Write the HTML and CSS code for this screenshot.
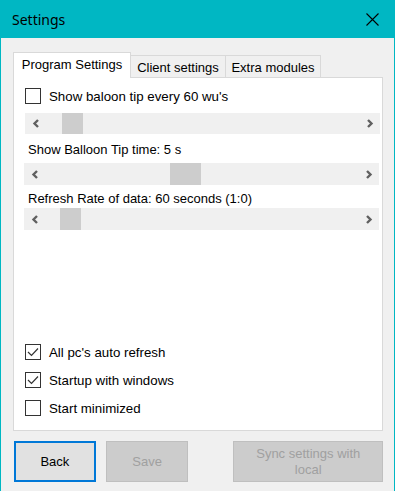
FILE: index.html
```html
<!DOCTYPE html>
<html>
<head>
  <meta charset="utf-8" />
  <title>Settings</title>
  <meta name="viewport" content="width=device-width, initial-scale=1">
  <link rel="stylesheet" href="styles.css">
</head>
<body>
  <div class="window">
    <div class="titlebar">
      <span class="title">Settings</span>
      <svg class="close" width="13" height="13" viewBox="0 0 13 13"><path d="M0.5 0.5 L12.5 12.5 M12.5 0.5 L0.5 12.5" stroke="#000" stroke-width="1.1" fill="none"/></svg>
    </div>
    <div class="client">
      <div class="tab-strip">
        <div class="tab active">Program Settings</div>
        <div class="tab client-tab">Client settings</div>
        <div class="tab extra-tab">Extra modules</div>
      </div>
      <div class="panel">
        <label class="check first">
          <span class="box"></span>
          <span>Show baloon tip every 60 wu's</span>
        </label>
        <div class="scrollbar sb1">
          <span class="arrow"><svg width="8" height="9" viewBox="0 0 8 9"><path d="M6 1 L2.5 4.5 L6 8" stroke="#606060" stroke-width="2.4" fill="none"/></svg></span>
          <div class="track"><span class="thumb" style="margin-left:16px"></span></div>
          <span class="arrow"><svg width="8" height="9" viewBox="0 0 8 9"><path d="M2 1 L5.5 4.5 L2 8" stroke="#606060" stroke-width="2.4" fill="none"/></svg></span>
        </div>
        <div class="label l2">Show Balloon Tip time: 5 s</div>
        <div class="scrollbar sb2">
          <span class="arrow"><svg width="8" height="9" viewBox="0 0 8 9"><path d="M6 1 L2.5 4.5 L6 8" stroke="#606060" stroke-width="2.4" fill="none"/></svg></span>
          <div class="track"><span class="thumb wide" style="margin-left:125px"></span></div>
          <span class="arrow"><svg width="8" height="9" viewBox="0 0 8 9"><path d="M2 1 L5.5 4.5 L2 8" stroke="#606060" stroke-width="2.4" fill="none"/></svg></span>
        </div>
        <div class="label l3">Refresh Rate of data: 60 seconds (1:0)</div>
        <div class="scrollbar sb3">
          <span class="arrow"><svg width="8" height="9" viewBox="0 0 8 9"><path d="M6 1 L2.5 4.5 L6 8" stroke="#606060" stroke-width="2.4" fill="none"/></svg></span>
          <div class="track"><span class="thumb" style="margin-left:15px"></span></div>
          <span class="arrow"><svg width="8" height="9" viewBox="0 0 8 9"><path d="M2 1 L5.5 4.5 L2 8" stroke="#606060" stroke-width="2.4" fill="none"/></svg></span>
        </div>
        <div class="bottom-checks">
          <label class="check">
            <span class="box"><svg width="14" height="14" viewBox="0 0 14 14"><path d="M2 7 L5.5 10.5 L12 3.5" stroke="#333" stroke-width="1.2" fill="none"/></svg></span>
            <span>All pc's auto refresh</span>
          </label>
          <label class="check">
            <span class="box"><svg width="14" height="14" viewBox="0 0 14 14"><path d="M2 7 L5.5 10.5 L12 3.5" stroke="#333" stroke-width="1.2" fill="none"/></svg></span>
            <span>Startup with windows</span>
          </label>
          <label class="check">
            <span class="box"></span>
            <span>Start minimized</span>
          </label>
        </div>
      </div>
      <div class="buttons">
        <button class="btn back">Back</button>
        <button class="btn disabled save">Save</button>
        <button class="btn disabled sync">Sync settings with<br>local</button>
      </div>
    </div>
  </div>
</body>
</html>
```

FILE: styles.css
```css
* { margin: 0; padding: 0; box-sizing: border-box; }
body { width: 395px; height: 491px; background: #00b7c3; font-family: 'Liberation Sans', Arial, sans-serif; font-size: 13px; color: #000; overflow: hidden; }
.window { display: flex; flex-direction: column; height: 491px; }
.titlebar { display: flex; align-items: center; justify-content: space-between; height: 38px; padding: 0 16px 0 12px; }
.title { font-family: 'Noto Sans', sans-serif; font-size: 14px; margin-top: 1px; }
.close { margin-top: 1px; }
.client { flex: 1; margin: 0 1px; background: #f0f0f0; padding: 14px 11px 0 12px; }

.tab-strip { display: flex; align-items: flex-end; height: 25px; }
.tab { height: 22px; border: 1px solid #d9d9d9; border-bottom: none; background: #f0f0f0; display: flex; align-items: center; justify-content: center; padding-top: 2px; }
.tab.active { position: relative; z-index: 1; height: 26px; margin-bottom: -1px; background: #fff; width: 118px; padding-top: 0; padding-bottom: 2px; }
.client-tab { width: 95px; border-left: none; }
.extra-tab { width: 95px; border-left: none; }

.panel { display: flex; flex-direction: column; width: 370px; height: 354px; background: #fff; border: 1px solid #d9d9d9; }
.check { display: flex; align-items: center; height: 16px; margin-left: 11px; gap: 8px; font-size: 13.3px; }
.check.first { margin-top: 10px; }
.box { width: 16px; height: 16px; border: 1px solid #333; background: #fff; display: flex; align-items: center; justify-content: center; }

.scrollbar { display: flex; width: 355px; background: #f0f0f0; }
.sb1 { margin: 9px 0 0 11px; height: 21px; }
.sb2 { margin: 5px 0 0 10px; height: 22px; }
.sb3 { margin: 1px 0 0 10px; height: 22px; }
.arrow { width: 21px; display: flex; align-items: center; justify-content: center; }
.track { flex: 1; display: flex; }
.thumb { width: 21px; background: #cdcdcd; }
.thumb.wide { width: 31px; }

.label { height: 16px; line-height: 16px; margin-left: 14px; }
.l2 { margin-top: 8px; }
.l3 { margin-top: 6px; }

.bottom-checks { margin-top: auto; padding-bottom: 14px; display: flex; flex-direction: column; gap: 12px; }

.buttons { display: flex; margin-top: 10px; padding-left: 1px; }
.btn { height: 41px; font-family: 'Liberation Sans', Arial, sans-serif; font-size: 13px; line-height: 16px; }
.back { width: 82px; background: #e1e1e1; border: 2px solid #0078d7; color: #000; }
.disabled { background: #cccccc; border: 1px solid #bfbfbf; color: #a0a0a0; }
.save { width: 83px; margin-left: 10px; }
.sync { width: 150px; margin-left: 45px; }
```
